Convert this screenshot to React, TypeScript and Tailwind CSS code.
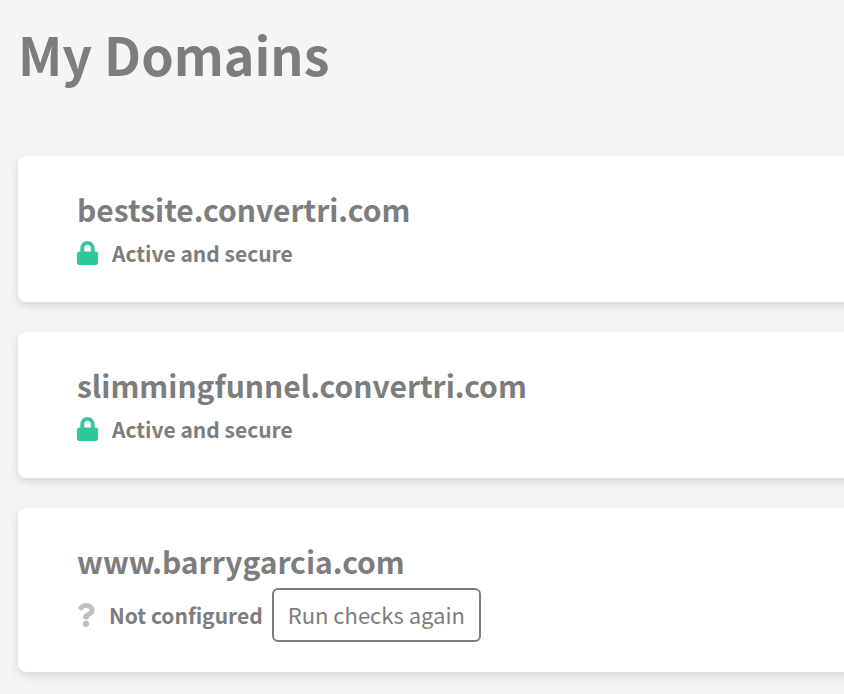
import { FaLock, FaQuestion } from "react-icons/fa"

const domains = [
  { name: "bestsite.convertri.com", configured: true },
  { name: "slimmingfunnel.convertri.com", configured: true },
  { name: "www.barrygarcia.com", configured: false },
]

export default function App() {
  return (
    <div className="min-h-screen overflow-hidden bg-[#f5f5f5] pl-[18px] pb-[22px] font-['Noto_Sans_CJK_SC',sans-serif] text-[#7d7d7d]">
      <h1 className="pt-[22px] pb-[70px] text-[52px] leading-[64px] font-bold">My Domains</h1>
      <ul className="-mr-4 flex flex-col gap-[30px]">
        {domains.map((domain) => (
          <DomainCard key={domain.name} name={domain.name} configured={domain.configured} />
        ))}
      </ul>
    </div>
  )
}

function DomainCard({ name, configured }: { name: string; configured: boolean }) {
  return (
    <li className="rounded-lg bg-white pt-[29px] pr-8 pb-[30px] pl-[59px] shadow-[0_4px_10px_rgba(0,0,0,0.12)]">
      <h2 className="mb-[3px] text-[30px] leading-[48px] font-bold">{name}</h2>
      {configured ? (
        <div className="mb-[2px] flex h-[34px] items-center gap-[14px]">
          <FaLock className="h-6 w-[21px] text-[#2fc999]" />
          <span className="text-[21px] leading-[34px] font-bold">Active and secure</span>
        </div>
      ) : (
        <div className="flex items-center">
          <FaQuestion className="mr-[14px] h-6 w-[18px] text-[#bfbfbf]" />
          <span className="mr-[9px] text-[21px] leading-[34px] font-bold">Not configured</span>
          <button className="rounded-md border-2 border-[#7d7d7d] px-[14px] pb-[2px] text-[22px] leading-[48px]">
            Run checks again
          </button>
        </div>
      )}
    </li>
  )
}
